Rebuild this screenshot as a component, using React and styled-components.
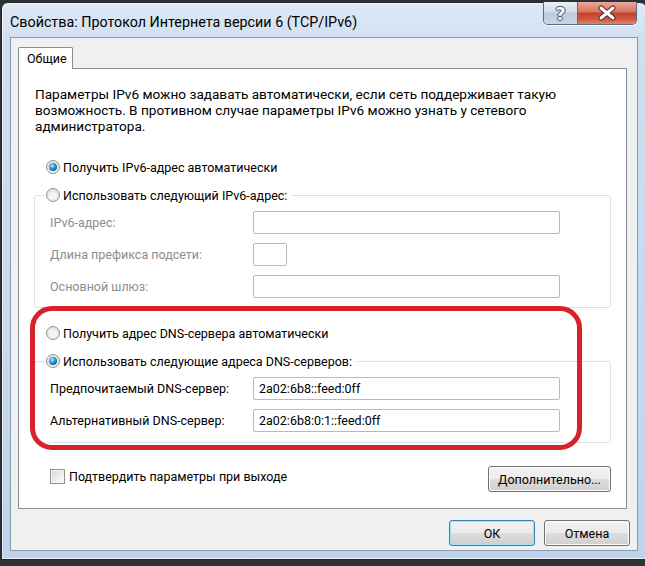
import React from 'react'
import styled, { createGlobalStyle } from 'styled-components';

const GlobalStyle = createGlobalStyle`
  html, body {
    margin: 0;
    padding: 0;
    background: #2e3236;
    overflow: hidden;
  }
  body {
    font-family: Roboto, "Noto Sans", sans-serif;
    font-size: 12.5px;
    color: #000;
  }
`;

const App = () => {
  return (
    <>
      <GlobalStyle />
      <Window>
        <TitleBar>
          <Title>Свойства: Протокол Интернета версии 6 (TCP/IPv6)</Title>
          <CaptionButtons>
            <HelpButton>?</HelpButton>
            <CloseButton>
              <svg width="22" height="16" viewBox="-11 -8 22 16">
                <path d="M-6 -5 L6 5 M6 -5 L-6 5" stroke="#5a2a22" strokeWidth="5" strokeLinecap="round" />
                <path d="M-6 -5 L6 5 M6 -5 L-6 5" stroke="#fff" strokeWidth="3" strokeLinecap="round" />
              </svg>
            </CloseButton>
          </CaptionButtons>
        </TitleBar>

        <Client>
          <TabStrip>
            <Tab>Общие</Tab>
          </TabStrip>
          <Page>
            <Intro>
              Параметры IPv6 можно задавать автоматически, если сеть поддерживает такую
              возможность. В противном случае параметры IPv6 можно узнать у сетевого
              администратора.
            </Intro>

            <RadioRow $offset={12} $top={24}>
              <Radio $checked />
              Получить IPv6-адрес автоматически
            </RadioRow>

            <GroupBox $top={10} $padTop={7} $padBottom={9}>
              <Legend>
                <Radio />
                Использовать следующий IPv6-адрес:
              </Legend>
              <FieldGrid>
                <FieldLabel $disabled>IPv6-адрес:</FieldLabel>
                <TextBox />
                <FieldLabel $disabled>Длина префикса подсети:</FieldLabel>
                <TextBox $small />
                <FieldLabel $disabled>Основной шлюз:</FieldLabel>
                <TextBox />
              </FieldGrid>
            </GroupBox>

            <DnsSection>
              <RadioRow $offset={12} $top={16}>
                <Radio />
                Получить адрес DNS-сервера автоматически
              </RadioRow>

              <GroupBox $top={10} $padTop={7} $padBottom={10}>
                <Legend>
                  <Radio $checked />
                  Использовать следующие адреса DNS-серверов:
                </Legend>
                <FieldGrid>
                  <FieldLabel>Предпочитаемый DNS-сервер:</FieldLabel>
                  <TextBox>2a02:6b8::feed:0ff</TextBox>
                  <FieldLabel>Альтернативный DNS-сервер:</FieldLabel>
                  <TextBox>2a02:6b8:0:1::feed:0ff</TextBox>
                </FieldGrid>
              </GroupBox>

              <Highlight />
            </DnsSection>

            <BottomRow>
              <CheckRow>
                <CheckBox />
                Подтвердить параметры при выходе
              </CheckRow>
              <Button $width={123}>Дополнительно...</Button>
            </BottomRow>
          </Page>

          <Footer>
            <Button $default $width={86}>ОК</Button>
            <Button $width={86}>Отмена</Button>
          </Footer>
        </Client>
      </Window>
    </>
  )
}

export default App;


const Window = styled.div`
  margin: 2px 0 0 1px;
  width: 646px;
  height: 558px;
  box-sizing: border-box;
  border: 1px solid #24282c;
  border-radius: 7px 7px 0 0;
  padding: 0 8px 8px 8px;
  display: flex;
  flex-direction: column;
  background: linear-gradient(180deg, #dfe9f5 0%, #cfdff0 40px, #bfd4ea 100%);
  box-shadow: inset 0 0 0 1px rgba(255,255,255,0.6);
`;

const TitleBar = styled.div`
  height: 34px;
  display: flex;
  justify-content: space-between;
  align-items: flex-start;
`;

const Title = styled.div`
  font-size: 14.3px;
  line-height: 20px;
  margin-top: 9px;
  color: #000;
  white-space: nowrap;
`;

const CaptionButtons = styled.div`
  display: flex;
  margin-top: -1px;
  margin-right: 1px;
  border: 1px solid #5d6a7a;
  border-top: none;
  border-radius: 0 0 5px 5px;
  overflow: hidden;
  box-shadow: 0 1px 0 rgba(255,255,255,0.7);
`;

const HelpButton = styled.div`
  width: 33px;
  height: 22px;
  display: flex;
  align-items: center;
  justify-content: center;
  font-family: "DejaVu Sans", sans-serif;
  font-weight: bold;
  font-size: 18px;
  color: #f4f6f8;
  text-shadow: 0 0 1px #4c5560, 1px 0 0 #4c5560, -1px 0 0 #4c5560, 0 1px 0 #4c5560, 0 -1px 0 #4c5560;
  border-right: 1px solid #5d6a7a;
  background: linear-gradient(180deg, #e7eef6 0%, #d3dde9 45%, #bccadb 50%, #c7d5e5 100%);
`;

const CloseButton = styled.div`
  width: 58px;
  height: 22px;
  display: flex;
  align-items: center;
  justify-content: center;
  background: linear-gradient(180deg, #e9a99b 0%, #d8735f 45%, #c4402b 50%, #d05a40 80%, #e0876a 100%);
`;

const Client = styled.div`
  flex: 1;
  background: #f0f0f0;
  border: 1px solid #8a9bb0;
  padding: 9px 7px 0 7px;
  display: flex;
  flex-direction: column;
`;

const TabStrip = styled.div`
  display: flex;
  position: relative;
  z-index: 1;
  margin-bottom: -1px;
`;

const Tab = styled.div`
  width: 55px;
  height: 22px;
  box-sizing: border-box;
  border: 1px solid #898c95;
  border-bottom: none;
  border-radius: 2px 2px 0 0;
  background: #fff;
  padding-left: 8px;
  line-height: 21px;
`;

const Page = styled.div`
  background: #fff;
  border: 1px solid #898c95;
  margin-right: 3px;
  padding: 17px 15px 16px 15px;
  display: flex;
  flex-direction: column;
`;

const Intro = styled.p`
  margin: 0;
  padding-left: 1px;
  line-height: 16px;
  font-size: 13.6px;
  width: 560px;
`;

const RadioRow = styled.div`
  display: flex;
  align-items: center;
  height: 18px;
  margin-top: ${p => p.$top}px;
  padding-left: ${p => p.$offset}px;
  gap: 3px;
  white-space: nowrap;
`;

const Radio = styled.span`
  position: relative;
  width: 14px;
  height: 14px;
  box-sizing: border-box;
  border-radius: 50%;
  border: 1px solid #8f9396;
  background: radial-gradient(circle at 50% 60%, #f4f4f4 30%, #d6d6d6 100%);
  flex-shrink: 0;
  &::after {
    content: '';
    display: ${p => p.$checked ? 'block' : 'none'};
    position: absolute;
    left: 2px;
    top: 2px;
    width: 8px;
    height: 8px;
    border-radius: 50%;
    background: radial-gradient(circle at 40% 35%, #b9ecff 0%, #3fa2d8 35%, #145a8c 75%, #0d3b5e 100%);
  }
`;

const GroupBox = styled.fieldset`
  margin: ${p => p.$top}px 0 0 0;
  border: 1px solid #dcdfe3;
  border-radius: 3px;
  padding: ${p => p.$padTop}px 0 ${p => p.$padBottom}px 15px;
  min-width: 0;
`;

const Legend = styled.legend`
  display: flex;
  align-items: center;
  gap: 3px;
  height: 18px;
  margin-left: -5px;
  padding: 0 5px 0 1px;
  white-space: nowrap;
`;

const FieldGrid = styled.div`
  display: grid;
  grid-template-columns: 203px 307px;
  grid-auto-rows: 23px;
  row-gap: 9px;
  align-items: center;
`;

const FieldLabel = styled.div`
  color: ${p => p.$disabled ? '#8d8d8d' : '#000'};
  white-space: nowrap;
`;

const TextBox = styled.div`
  height: 23px;
  box-sizing: border-box;
  width: ${p => p.$small ? '34px' : '307px'};
  border: 1px solid #b7b9bd;
  border-radius: 2px;
  background: #fff;
  padding: 0 5px;
  line-height: 21px;
  white-space: nowrap;
`;

const DnsSection = styled.div`
  position: relative;
`;

const Highlight = styled.div`
  position: absolute;
  left: -4px;
  right: 29px;
  top: -2px;
  bottom: -7px;
  border: 5px solid #d8222b;
  border-radius: 22px;
  pointer-events: none;
`;

const BottomRow = styled.div`
  margin-top: 23px;
  display: flex;
  align-items: center;
  justify-content: space-between;
  padding-left: 16px;
`;

const CheckRow = styled.div`
  display: flex;
  align-items: center;
  gap: 4px;
  margin-top: -6px;
`;

const CheckBox = styled.span`
  width: 15px;
  height: 15px;
  box-sizing: border-box;
  border: 1px solid #8f8f8f;
  background: linear-gradient(135deg, #d4d4d4 0%, #f0f0f0 60%, #ffffff 100%);
  box-shadow: inset 0 0 0 1px #f4f4f4;
`;

const Button = styled.div`
  width: ${p => p.$width}px;
  height: 26px;
  box-sizing: border-box;
  display: flex;
  align-items: center;
  justify-content: center;
  border: 1px solid ${p => p.$default ? '#3c7fb1' : '#707070'};
  border-radius: 3px;
  background: linear-gradient(180deg, #f2f2f2 0%, #ebebeb 48%, #dddddd 52%, #cfcfcf 100%);
  box-shadow: inset 0 0 0 1px ${p => p.$default ? '#9fe2f8' : '#fcfcfc'};
  white-space: nowrap;
`;

const Footer = styled.div`
  display: flex;
  justify-content: flex-end;
  gap: 9px;
  padding-top: 11px;
`;
